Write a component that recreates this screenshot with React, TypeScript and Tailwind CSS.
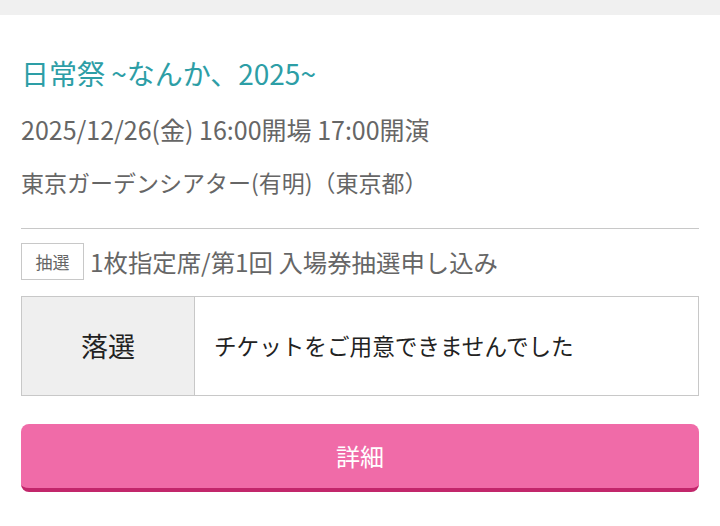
export default function App() {
  return (
    <div className="w-[720px] h-[526px] bg-white font-['Noto_Sans_CJK_JP','Noto_Sans',sans-serif] overflow-hidden">
      <div className="h-[15px] bg-[#f0f0f0]" />
      <div className="px-[21px] pt-[40px]">
        <h1 className="text-[28px] leading-[36px] text-[#2d9ea6]">日常祭 ~なんか、2025~</h1>
        <p className="mt-[22px] text-[25px] leading-[32px] text-[#666]">2025/12/26(金) 16:00開場 17:00開演</p>
        <p className="mt-[21px] text-[23px] leading-[32px] text-[#666]">東京ガーデンシアター(有明)（東京都）</p>
        <div className="mt-[30px] border-t border-[#c8c8c8]" />
        <div className="mt-[14px] flex items-center gap-[6px]">
          <span className="w-[63px] h-[37px] flex items-center justify-center border border-[#c8c8c8] text-[17px] text-[#666]">抽選</span>
          <span className="text-[24.4px] leading-[32px] text-[#666]">1枚指定席/第1回 入場券抽選申し込み</span>
        </div>
        <div className="mt-[16px] flex h-[100px] border border-[#c8c8c8]">
          <div className="w-[173px] flex items-center justify-center bg-[#efefef] border-r border-[#c8c8c8] text-[27px] text-[#222]">落選</div>
          <div className="flex-1 flex items-center pl-[19px] text-[22.6px] text-[#222]">チケットをご用意できませんでした</div>
        </div>
        <button className="mt-[28px] w-full h-[68px] rounded-[8px] bg-[#f06ba8] border-b-[4px] border-[#c2266b] text-white text-[24px]">詳細</button>
      </div>
    </div>
  );
}
